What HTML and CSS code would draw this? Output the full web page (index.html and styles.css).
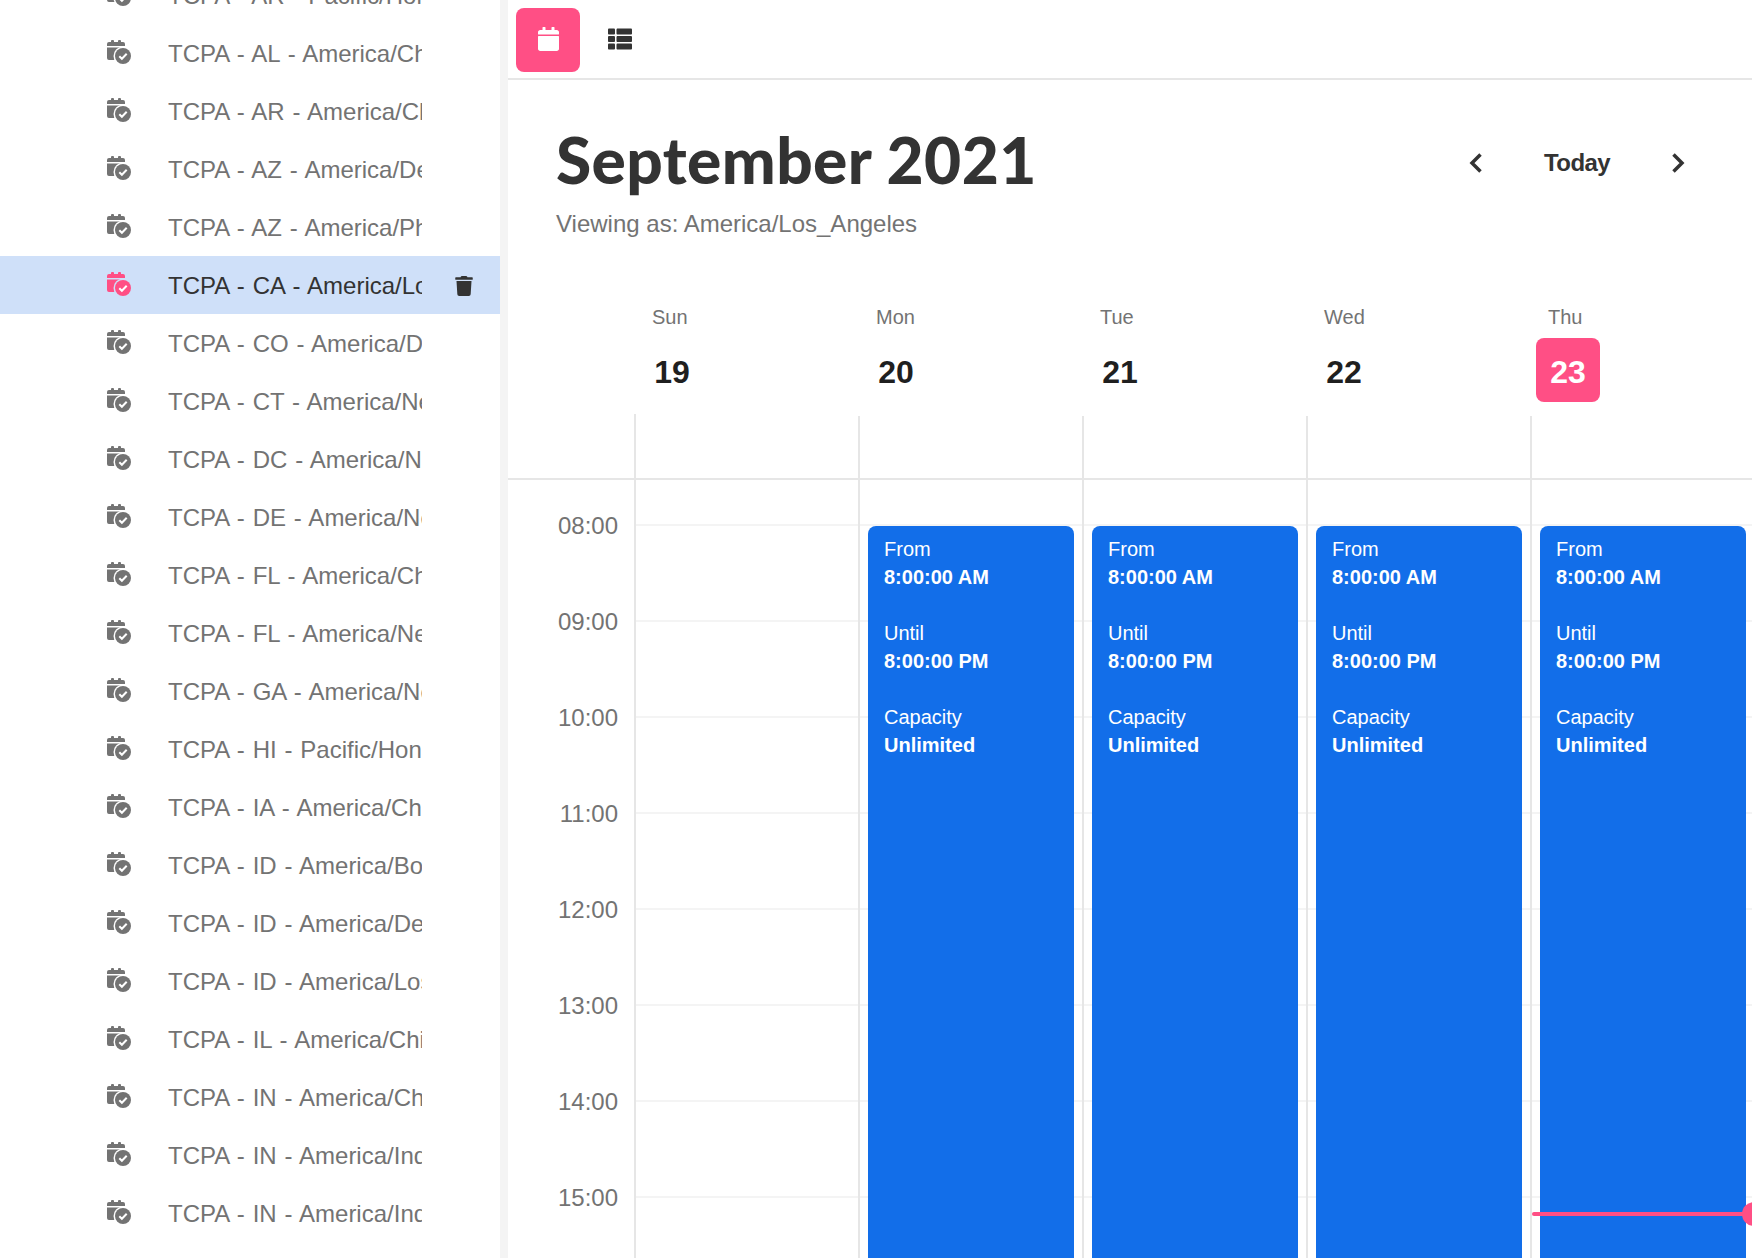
FILE: index.html
```html
<!DOCTYPE html>
<html>
<head>
<meta charset="utf-8">
<title>Calendar</title>
<link rel="stylesheet" href="styles.css">
</head>
<body>

<svg class="defs" width="0" height="0">
  <symbol id="cal-check" viewBox="0 0 24 24">
    <path class="ic-fill" d="M4 2V1a1 1 0 0 1 1-1h1a1 1 0 0 1 1 1v1h4V1a1 1 0 0 1 1-1h1a1 1 0 0 1 1 1v1h2a2 2 0 0 1 2 2v2H0V4a2 2 0 0 1 2-2zM0 7.500h18V20H2a2 2 0 0 1-2-2z"/>
    <circle class="ic-ring" cx="16" cy="16" r="9.500"/>
    <circle class="ic-fill" cx="16" cy="16" r="8"/>
    <path class="ic-check" d="M12.300 16.200l2.600 2.600 4.800-5"/>
  </symbol>
</svg>

<div class="app">
  <aside class="sidebar">
    <ul class="queue-list">
      <li class="queue"><svg class="cal-ic"><use href="#cal-check"/></svg><span class="queue-name">TCPA - AR - Pacific/Honolulu</span></li>
      <li class="queue"><svg class="cal-ic"><use href="#cal-check"/></svg><span class="queue-name">TCPA - AL - America/Chicago</span></li>
      <li class="queue"><svg class="cal-ic"><use href="#cal-check"/></svg><span class="queue-name">TCPA - AR - America/Chicago</span></li>
      <li class="queue"><svg class="cal-ic"><use href="#cal-check"/></svg><span class="queue-name">TCPA - AZ - America/Denver</span></li>
      <li class="queue"><svg class="cal-ic"><use href="#cal-check"/></svg><span class="queue-name">TCPA - AZ - America/Phoenix</span></li>
      <li class="queue selected">
        <svg class="cal-ic"><use href="#cal-check"/></svg><span class="queue-name">TCPA - CA - America/Los_Angeles</span>
        <svg class="trash" viewBox="0 0 448 512"><path d="M432 32H312l-9.400-18.700A24 24 0 0 0 281.100 0H166.800a23.720 23.720 0 0 0-21.400 13.300L136 32H16A16 16 0 0 0 0 48v32a16 16 0 0 0 16 16h416a16 16 0 0 0 16-16V48a16 16 0 0 0-16-16zM53.200 467a48 48 0 0 0 47.900 45h245.800a48 48 0 0 0 47.900-45L416 128H32z"/></svg>
      </li>
      <li class="queue"><svg class="cal-ic"><use href="#cal-check"/></svg><span class="queue-name">TCPA - CO - America/Denver</span></li>
      <li class="queue"><svg class="cal-ic"><use href="#cal-check"/></svg><span class="queue-name">TCPA - CT - America/New_York</span></li>
      <li class="queue"><svg class="cal-ic"><use href="#cal-check"/></svg><span class="queue-name">TCPA - DC - America/New_York</span></li>
      <li class="queue"><svg class="cal-ic"><use href="#cal-check"/></svg><span class="queue-name">TCPA - DE - America/New_York</span></li>
      <li class="queue"><svg class="cal-ic"><use href="#cal-check"/></svg><span class="queue-name">TCPA - FL - America/Chicago</span></li>
      <li class="queue"><svg class="cal-ic"><use href="#cal-check"/></svg><span class="queue-name">TCPA - FL - America/New_York</span></li>
      <li class="queue"><svg class="cal-ic"><use href="#cal-check"/></svg><span class="queue-name">TCPA - GA - America/New_York</span></li>
      <li class="queue"><svg class="cal-ic"><use href="#cal-check"/></svg><span class="queue-name">TCPA - HI - Pacific/Honolulu</span></li>
      <li class="queue"><svg class="cal-ic"><use href="#cal-check"/></svg><span class="queue-name">TCPA - IA - America/Chicago</span></li>
      <li class="queue"><svg class="cal-ic"><use href="#cal-check"/></svg><span class="queue-name">TCPA - ID - America/Boise</span></li>
      <li class="queue"><svg class="cal-ic"><use href="#cal-check"/></svg><span class="queue-name">TCPA - ID - America/Denver</span></li>
      <li class="queue"><svg class="cal-ic"><use href="#cal-check"/></svg><span class="queue-name">TCPA - ID - America/Los_Angeles</span></li>
      <li class="queue"><svg class="cal-ic"><use href="#cal-check"/></svg><span class="queue-name">TCPA - IL - America/Chicago</span></li>
      <li class="queue"><svg class="cal-ic"><use href="#cal-check"/></svg><span class="queue-name">TCPA - IN - America/Chicago</span></li>
      <li class="queue"><svg class="cal-ic"><use href="#cal-check"/></svg><span class="queue-name">TCPA - IN - America/Indiana/Indianapolis</span></li>
      <li class="queue"><svg class="cal-ic"><use href="#cal-check"/></svg><span class="queue-name">TCPA - IN - America/Indiana/Knox</span></li>
    </ul>
  </aside>

  <main class="main">
    <div class="toolbar">
      <button class="view-btn active">
        <svg class="ic-calendar" viewBox="0 0 448 512"><path d="M12 192h424c6.600 0 12 5.400 12 12v260c0 26.500-21.500 48-48 48H48c-26.500 0-48-21.500-48-48V204c0-6.600 5.400-12 12-12zm436-44v-36c0-26.500-21.500-48-48-48h-48V12c0-6.600-5.400-12-12-12h-40c-6.600 0-12 5.400-12 12v52H160V12c0-6.600-5.400-12-12-12h-40c-6.600 0-12 5.400-12 12v52H48C21.500 64 0 85.500 0 112v36c0 6.600 5.400 12 12 12h424c6.600 0 12-5.400 12-12z"/></svg>
      </button>
      <button class="view-btn">
        <svg class="ic-list" viewBox="0 0 512 512"><path d="M149.333 216v80c0 13.255-10.745 24-24 24H24c-13.255 0-24-10.745-24-24v-80c0-13.255 10.745-24 24-24h101.333c13.255 0 24 10.745 24 24zM0 376v80c0 13.255 10.745 24 24 24h101.333c13.255 0 24-10.745 24-24v-80c0-13.255-10.745-24-24-24H24c-13.255 0-24 10.745-24 24zM125.333 32H24C10.745 32 0 42.745 0 56v80c0 13.255 10.745 24 24 24h101.333c13.255 0 24-10.745 24-24V56c0-13.255-10.745-24-24-24zm80 448H488c13.255 0 24-10.745 24-24v-80c0-13.255-10.745-24-24-24H205.333c-13.255 0-24 10.745-24 24v80c0 13.255 10.745 24 24 24zm-24-424v80c0 13.255 10.745 24 24 24H488c13.255 0 24-10.745 24-24V56c0-13.255-10.745-24-24-24H205.333c-13.255 0-24 10.745-24 24zm24 264H488c13.255 0 24-10.745 24-24v-80c0-13.255-10.745-24-24-24H205.333c-13.255 0-24 10.745-24 24v80c0 13.255 10.745 24 24 24z"/></svg>
      </button>
    </div>

    <header class="cal-head">
      <div>
        <h1 class="month">September 2021</h1>
        <div class="viewing">Viewing as: America/Los_Angeles</div>
      </div>
      <nav class="cal-nav">
        <svg class="chev" viewBox="0 0 14 22"><path d="M11.500 2.500L3 11l8.500 8.500"/></svg>
        <span class="today">Today</span>
        <svg class="chev" viewBox="0 0 14 22"><path d="M2.500 2.500L11 11l-8.500 8.500"/></svg>
      </nav>
    </header>

    <div class="week-row">
      <div class="gutter"></div>
      <div class="day-head"><div class="dow">Sun</div><div class="date">19</div></div>
      <div class="day-head"><div class="dow">Mon</div><div class="date">20</div></div>
      <div class="day-head"><div class="dow">Tue</div><div class="date">21</div></div>
      <div class="day-head"><div class="dow">Wed</div><div class="date">22</div></div>
      <div class="day-head"><div class="dow">Thu</div><div class="date now">23</div></div>
    </div>

    <div class="week-row allday">
      <div class="gutter"></div>
      <div class="allday-cell first"></div>
      <div class="allday-cell"></div>
      <div class="allday-cell"></div>
      <div class="allday-cell"></div>
      <div class="allday-cell"></div>
    </div>

    <div class="week-row hours">
      <div class="times">
        <div class="time">08:00</div>
        <div class="time">09:00</div>
        <div class="time">10:00</div>
        <div class="time">11:00</div>
        <div class="time">12:00</div>
        <div class="time">13:00</div>
        <div class="time">14:00</div>
        <div class="time">15:00</div>
      </div>
      <div class="day-col"></div>
      <div class="day-col">
        <div class="event">From<br><b>8:00:00 AM</b><br><br>Until<br><b>8:00:00 PM</b><br><br>Capacity<br><b>Unlimited</b></div>
      </div>
      <div class="day-col">
        <div class="event">From<br><b>8:00:00 AM</b><br><br>Until<br><b>8:00:00 PM</b><br><br>Capacity<br><b>Unlimited</b></div>
      </div>
      <div class="day-col">
        <div class="event">From<br><b>8:00:00 AM</b><br><br>Until<br><b>8:00:00 PM</b><br><br>Capacity<br><b>Unlimited</b></div>
      </div>
      <div class="day-col">
        <div class="event">From<br><b>8:00:00 AM</b><br><br>Until<br><b>8:00:00 PM</b><br><br>Capacity<br><b>Unlimited</b></div>
        <div class="now-line"></div>
        <div class="now-dot"></div>
      </div>
    </div>
  </main>
</div>

</body>
</html>
```

FILE: styles.css
```css
* {
  box-sizing: border-box;
}
html, body {
  margin: 0;
  height: 100%;
  overflow: hidden;
}
body {
  font-family: "Liberation Sans", Arial, sans-serif;
  font-size: 24px;
  color: #333;
  background: #fff;
}
.defs {
  position: absolute;
}
.app {
  display: flex;
  height: 1258px;
  overflow: hidden;
}

/* sidebar */
.sidebar {
  flex: 0 0 500px;
  overflow: hidden;
}
.queue-list {
  list-style: none;
  margin: -34px 0 0;
  padding: 0;
}
.queue {
  --row-bg: #fff;
  --ic: #737373;
  display: flex;
  align-items: center;
  height: 58px;
  padding-left: 107px;
  color: #737373;
  background: var(--row-bg);
}
.queue.selected {
  --row-bg: #cfe0f9;
  --ic: #ff4f85;
  color: #333;
}
.cal-ic {
  flex: none;
  width: 24px;
  height: 24px;
  margin-top: -2px;
}
.ic-fill {
  fill: var(--ic);
}
.ic-ring {
  fill: var(--row-bg);
}
.ic-check {
  fill: none;
  stroke: #fff;
  stroke-width: 2;
}
.queue-name {
  display: block;
  width: 254px;
  margin-left: 37px;
  padding-top: 2px;
  word-spacing: 1.2px;
  white-space: nowrap;
  overflow: hidden;
}
.trash {
  width: 18px;
  height: 20px;
  margin: 2px 0 0 33px;
  fill: #333;
}

/* main */
.main {
  flex: 1;
  min-width: 0;
  border-left: 8px solid #f4f4f4;
  overflow: hidden;
}
.toolbar {
  display: flex;
  align-items: flex-start;
  height: 80px;
  padding: 8px 0 0 8px;
  border-bottom: 2px solid #e6e6e6;
}
.view-btn {
  display: flex;
  align-items: center;
  justify-content: center;
  width: 64px;
  height: 64px;
  margin-right: 8px;
  padding: 0 0 2px;
  border: 0;
  border-radius: 8px;
  background: none;
}
.view-btn.active {
  background: #ff4f85;
}
.ic-calendar {
  width: 21px;
  height: 24px;
  fill: #fff;
}
.ic-list {
  width: 24px;
  height: 24px;
  fill: #333;
}
.cal-head {
  display: flex;
  justify-content: space-between;
  height: 223px;
  padding: 44px 0 0 48px;
}
.month {
  margin: 0;
  font-family: Lato, "Liberation Sans", sans-serif;
  font-size: 64px;
  font-weight: 900;
  line-height: 72px;
  letter-spacing: .4px;
}
.viewing {
  margin-top: 14px;
  line-height: 28px;
  color: #737373;
}
.cal-nav {
  display: flex;
  align-items: center;
  align-self: flex-start;
  height: 28px;
  margin: 25px 67px 0 0;
}
.chev {
  width: 14px;
  height: 22px;
  fill: none;
  stroke: #333;
  stroke-width: 3.500;
}
.today {
  margin: 0 61px;
  font-weight: bold;
  letter-spacing: -.6px;
}

/* week grid */
.week-row {
  display: grid;
  grid-template-columns: 126px repeat(5, 224px);
}
.day-head {
  padding-left: 18px;
}
.dow {
  font-size: 20px;
  line-height: 28px;
  color: #737373;
}
.date {
  display: flex;
  align-items: center;
  justify-content: center;
  width: 64px;
  height: 64px;
  margin: 7px 0 0 -12px;
  padding-top: 5px;
  border-radius: 8px;
  font-size: 32px;
  font-weight: bold;
  color: #1f1f1f;
}
.date.now {
  color: #fff;
  background: #ff4f85;
}
.allday {
  height: 78px;
  padding-top: 12px;
  border-bottom: 2px solid #e6e6e6;
}
.allday-cell {
  margin-top: 2px;
  border-left: 2px solid #e6e6e6;
}
.allday-cell.first {
  margin-top: 0;
}
.hours {
  height: 778px;
}
.times {
  margin-top: -2px;
}
.time {
  height: 96px;
  padding-right: 16px;
  line-height: 96px;
  text-align: right;
  color: #737373;
}
.day-col {
  position: relative;
  border-left: 2px solid #e6e6e6;
  background: linear-gradient(#f4f4f4 2px, transparent 2px) 0 44px / 100% 96px repeat-y;
}
.event {
  position: absolute;
  top: 46px;
  left: 8px;
  right: 8px;
  bottom: 0;
  padding: 9px 16px;
  border-radius: 8px 8px 0 0;
  font-size: 20px;
  line-height: 28px;
  color: #fff;
  background: #126ee9;
}
.now-line {
  position: absolute;
  top: 732px;
  left: 0;
  right: 0;
  height: 4px;
  border-radius: 2px;
  background: #ff4f85;
}
.now-dot {
  position: absolute;
  top: 722px;
  left: 210px;
  width: 24px;
  height: 24px;
  border-radius: 50%;
  background: #ff4f85;
}
```
